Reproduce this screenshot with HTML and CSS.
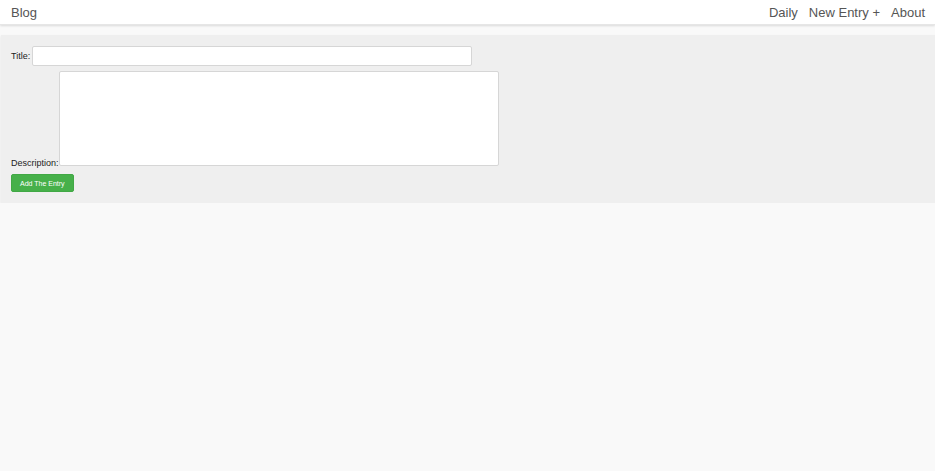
FILE: index.html
```html
<!DOCTYPE html>
<html lang="en">
<head>
<meta charset="utf-8">
<title>Blog</title>
<link rel="stylesheet" href="styles.css">
</head>
<body>
<header class="navbar">
  <a class="brand" href="#">Blog</a>
  <nav class="links">
    <a href="#">Daily</a>
    <a href="#">New Entry +</a>
    <a href="#">About</a>
  </nav>
</header>
<main class="panel">
  <form class="entry-form">
    <div class="row">
      <label class="lbl" for="title">Title:</label>
      <input class="title-input" id="title" type="text">
    </div>
    <div class="row row-desc">
      <label class="lbl" for="desc">Description:</label>
      <textarea class="desc-input" id="desc"></textarea>
    </div>
    <button class="btn" type="button">Add The Entry</button>
  </form>
</main>
</body>
</html>
```

FILE: styles.css
```css
html, body {
  margin: 0;
  padding: 0;
  background: #f9f9f9;
  font-family: "Liberation Sans", Arial, sans-serif;
}
.navbar {
  height: 24px;
  background: #ffffff;
  display: flex;
  align-items: center;
  justify-content: space-between;
  padding: 0 10px 0 11px;
  box-shadow: 0 1px 2px rgba(0,0,0,0.12);
  border-bottom: 1px solid #e6e6e6;
}
.navbar a {
  color: #555;
  text-decoration: none;
  font-size: 13px;
}
.links {
  display: flex;
  gap: 11px;
  padding-top: 1px;
}
.panel {
  margin-top: 10px;
  margin-left: 1px;
  background: #efefef;
  padding: 11px 11px 11px 10px;
  box-shadow: 0 1px 2px rgba(0,0,0,0.10);
}
.entry-form {
  display: flex;
  flex-direction: column;
  align-items: flex-start;
}
.row {
  display: flex;
  align-items: center;
  gap: 2px;
}
.row-desc {
  margin-top: 5px;
  align-items: flex-end;
  gap: 0;
}
.lbl {
  font-size: 9px;
  color: #222;
}
.row-desc .lbl {
  line-height: 9px;
  margin-bottom: -2px;
}
.title-input {
  width: 440px;
  height: 20px;
  box-sizing: border-box;
  border: 1px solid #d6d6d6;
  border-radius: 2px;
  background: #fff;
  margin: 0;
}
.desc-input {
  width: 440px;
  height: 95px;
  box-sizing: border-box;
  border: 1px solid #d6d6d6;
  border-radius: 2px;
  background: #fff;
  resize: none;
  margin: 0;
}
.btn {
  margin-top: 8px;
  height: 18px;
  padding: 0 8px;
  background: #46b04a;
  color: #fff;
  border: 1px solid #41a845;
  border-radius: 2px;
  font-family: "Liberation Sans", Arial, sans-serif;
  font-size: 7px;
}
```
